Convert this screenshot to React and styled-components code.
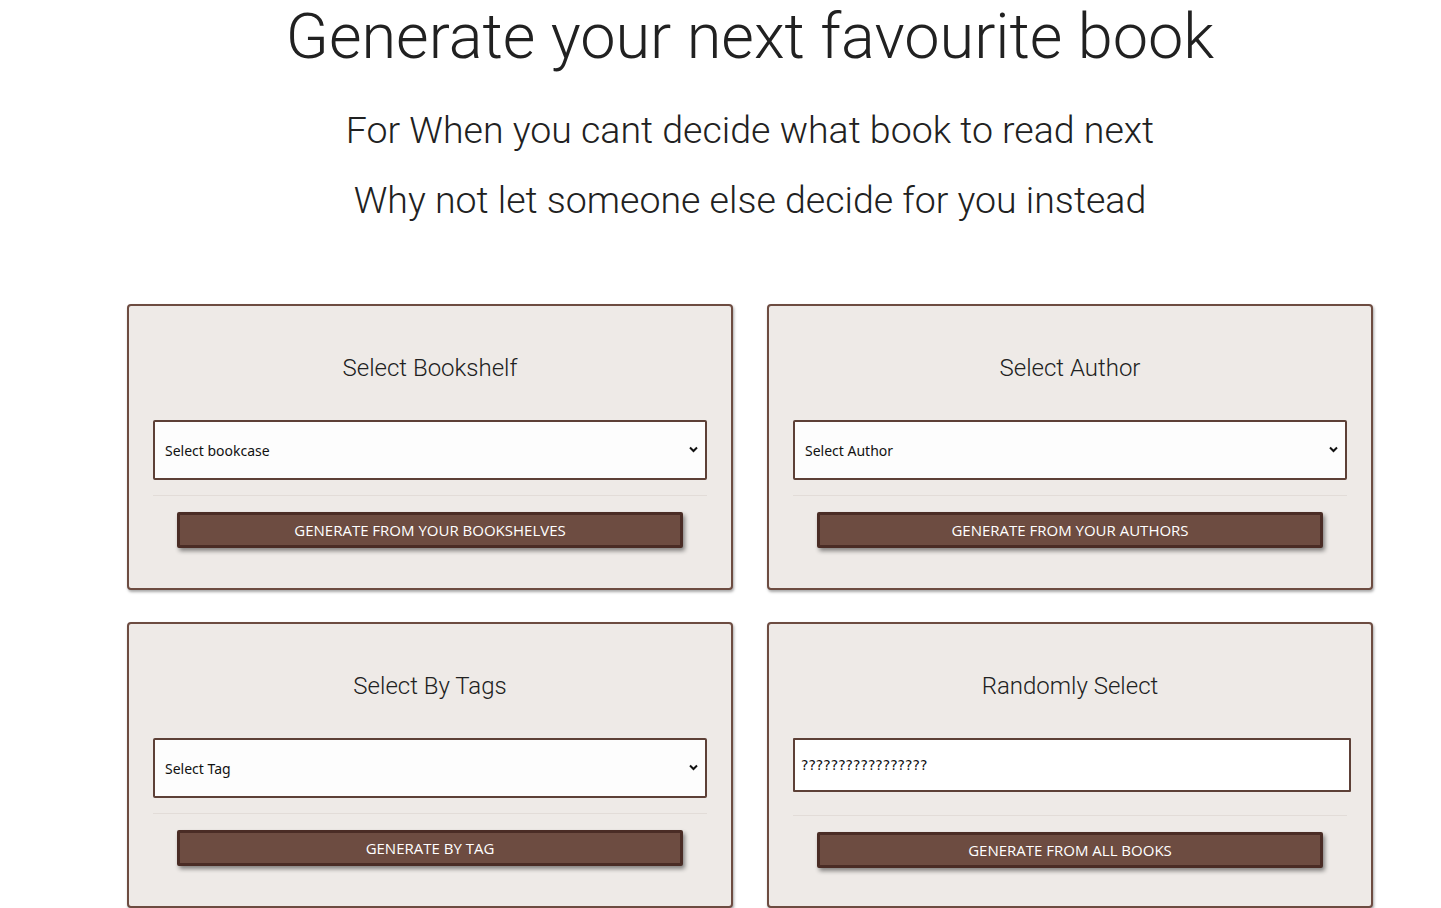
import React from "react";
import styled, { createGlobalStyle } from "styled-components";

const Global = createGlobalStyle`
  html, body { margin: 0; padding: 0; background: #ffffff; overflow: hidden; }
  body { font-family: Roboto, "Liberation Sans", sans-serif; color: #212121; }
`;

const Page = styled.div`
  width: 1500px;
  text-align: center;
`;

const Title = styled.h1`
  margin: 0;
  font-family: Roboto, sans-serif;
  font-weight: 300;
  font-size: 63px;
  line-height: 73px;
  color: #212121;
`;

const Sub = styled.h2`
  margin: 0;
  font-family: Roboto, sans-serif;
  font-weight: 300;
  font-size: 37.5px;
  line-height: 70px;
  color: #212121;
`;

const Intro = styled.div`
  padding-top: 22px;
`;

const Grid = styled.div`
  width: 1246px;
  margin: 69px auto 0;
  display: grid;
  grid-template-columns: 606px 606px;
  column-gap: 34px;
  row-gap: 32px;
`;

const Card = styled.section`
  box-sizing: border-box;
  height: 286px;
  background: #eeeae7;
  border: 2px solid #6d4c41;
  border-radius: 4px;
  box-shadow: 1px 2px 3px rgba(0, 0, 0, 0.35);
  padding: 48px 24px 24px;
  display: flex;
  flex-direction: column;
  align-items: center;
`;

const CardTitle = styled.h3`
  margin: 0 0 38px;
  font-family: Roboto, sans-serif;
  font-weight: 300;
  font-size: 24px;
  line-height: 28px;
  color: #212121;
`;

const SelectWrap = styled.div`
  position: relative;
  width: 554px;
  height: 60px;
`;

const Select = styled.select`
  appearance: none;
  box-sizing: border-box;
  width: 100%;
  height: 100%;
  background: #fdfdfd;
  border: 2px solid #5d4037;
  border-radius: 2px;
  padding: 0 10px;
  font-family: "Noto Sans", "Open Sans", sans-serif;
  font-size: 14px;
  color: #111;
  outline: none;
`;

const Chevron = styled.svg`
  position: absolute;
  right: 9px;
  top: 26px;
  width: 9px;
  height: 7px;
  pointer-events: none;
`;

const Input = styled.input`
  align-self: flex-start;
  box-sizing: border-box;
  width: 558px;
  height: 54px;
  margin-bottom: 8px;
  background: #ffffff;
  border: 2px solid #5d4037;
  border-radius: 1px;
  padding: 0 6px;
  font-family: "DejaVu Sans", sans-serif;
  font-size: 14px;
  color: #111;
  outline: none;
`;

const Divider = styled.hr`
  width: 554px;
  margin: 15px 0 16px;
  border: 0;
  border-top: 1px solid #e2dcd8;
`;

const Button = styled.button`
  box-sizing: border-box;
  width: 506px;
  height: 36px;
  background: #6d4c41;
  border: 3px solid #4a2c25;
  border-radius: 2px;
  box-shadow: 2px 3px 4px rgba(0, 0, 0, 0.45);
  color: #ffffff;
  font-family: "Open Sans", "Noto Sans", sans-serif;
  font-size: 15px;
  letter-spacing: 0;
  text-transform: uppercase;
  cursor: pointer;
`;

const ChevronIcon = () => (
  <Chevron viewBox="0 0 9 7">
    <path d="M1 1.5 L4.5 5 L8 1.5" fill="none" stroke="#111" strokeWidth="2" />
  </Chevron>
);

const SelectCard = ({ title, placeholder, button }) => (
  <Card>
    <CardTitle>{title}</CardTitle>
    <SelectWrap>
      <Select defaultValue="">
        <option value="">{placeholder}</option>
      </Select>
      <ChevronIcon />
    </SelectWrap>
    <Divider />
    <Button>{button}</Button>
  </Card>
);

export default function App() {
  return (
    <Page>
      <Global />
      <Title>Generate your next favourite book</Title>
      <Intro>
        <Sub>For When you cant decide what book to read next</Sub>
        <Sub>Why not let someone else decide for you instead</Sub>
      </Intro>
      <Grid>
        <SelectCard title="Select Bookshelf" placeholder="Select bookcase" button="Generate from your bookshelves" />
        <SelectCard title="Select Author" placeholder="Select Author" button="Generate from your authors" />
        <SelectCard title="Select By Tags" placeholder="Select Tag" button="Generate by tag" />
        <Card>
          <CardTitle>Randomly Select</CardTitle>
          <Input readOnly value="?????????????????" />
          <Divider />
          <Button>Generate from all books</Button>
        </Card>
      </Grid>
    </Page>
  );
}
